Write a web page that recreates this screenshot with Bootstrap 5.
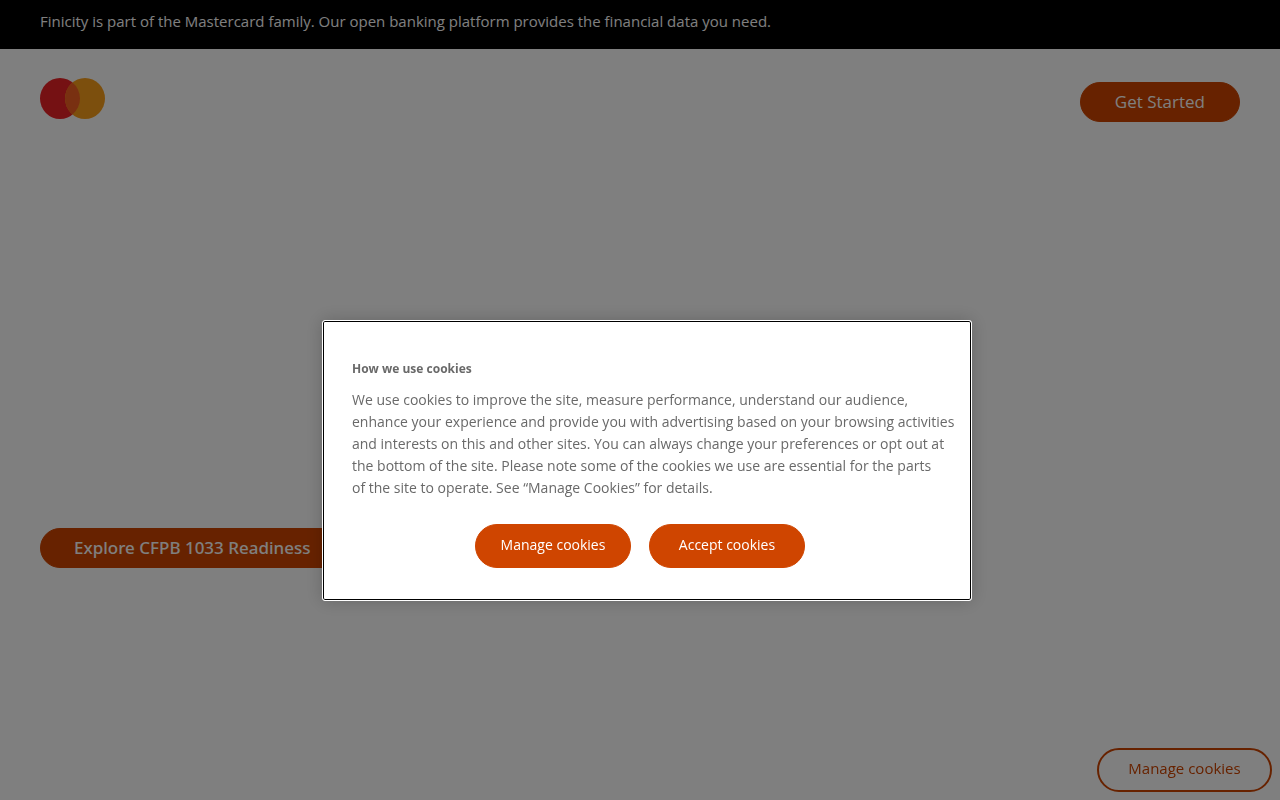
<!DOCTYPE html>
<html lang="en">
<head>
<meta charset="utf-8">
<meta name="viewport" content="width=device-width, initial-scale=1">
<title>Finicity, a Mastercard company</title>
<link href="https://cdn.jsdelivr.net/npm/bootstrap@5.3.0/dist/css/bootstrap.min.css" rel="stylesheet">
<style>
  :root { --brand: #cf4500; }
  body { font-family: "Open Sans", "Noto Sans", sans-serif; }
  .notice { font-size: 15px; line-height: 20px; padding: 11px 40px 18px; }
  .site-header { padding: 29px 40px; }
  .btn-brand {
    --bs-btn-bg: var(--brand); --bs-btn-color: #fff; --bs-btn-border-color: var(--brand);
    --bs-btn-hover-bg: #b03b00; --bs-btn-hover-color: #fff; --bs-btn-hover-border-color: #b03b00;
    --bs-btn-active-bg: #b03b00; --bs-btn-active-color: #fff;
  }
  .btn-cta { font-size: 17px; line-height: 24px; padding: 7px 34px; }
  .btn-hero { font-family: "Noto Sans", "Open Sans", sans-serif; font-weight: 500; padding: 7px 33px; }
  .btn-consent { font-size: 14px; line-height: 20px; padding: 10px 0 12px; width: 156px; }
  .btn-manage {
    --bs-btn-color: var(--brand); --bs-btn-border-color: var(--brand); --bs-btn-border-width: 2px;
    --bs-btn-hover-color: #fff; --bs-btn-hover-bg: var(--brand);
    font-size: 15px; line-height: 20px; padding: 8px 0 12px; width: 175px;
  }
  .hero { padding: 377px 40px 0; }
  .consent-layer { padding: 121px 0 0 14px; }
  .consent {
    width: 650px; color: #696969;
    border: 1px solid #fff; border-radius: 3px;
    box-shadow: inset 0 0 0 1px #000, 0 0 18px rgba(0, 0, 0, .2);
    padding: 39px 15px 32px 29px;
  }
  .consent h2 { font-size: 12px; line-height: 18px; margin-bottom: 11px; }
  .consent p { font-size: 14px; line-height: 22px; margin-bottom: 25px; }
  .consent-actions { gap: 18px; padding-right: 28px; }
</style>
</head>
<body class="bg-white">
<div class="notice bg-black text-white">Finicity is part of the Mastercard family. Our open banking platform provides the financial data you need.</div>
<header class="site-header d-flex justify-content-between align-items-start">
  <a href="#" aria-label="Mastercard home" class="d-block lh-1">
    <svg class="d-block" width="65" height="41" viewBox="0 0 65 41" aria-hidden="true">
      <ellipse cx="20" cy="20.5" rx="20" ry="20.5" fill="#eb2226"/>
      <ellipse cx="45" cy="20.5" rx="20" ry="20.5" fill="#f99f1b"/>
      <path d="M32.5 4.5A20 20.5 0 0 1 32.5 36.5A20 20.5 0 0 1 32.5 4.5Z" fill="#f26122"/>
    </svg>
  </a>
  <a href="#" class="btn btn-brand btn-cta rounded-pill mt-1">Get Started</a>
</header>
<main class="hero">
  <a href="#" class="btn btn-brand btn-cta btn-hero rounded-pill">Explore CFPB 1033 Readiness</a>
</main>
<div class="position-fixed bottom-0 end-0 p-2">
  <button type="button" class="btn btn-manage rounded-pill">Manage cookies</button>
</div>
<div class="modal-backdrop show"></div>
<div class="modal d-flex align-items-center justify-content-center consent-layer" role="dialog" aria-modal="true" aria-labelledby="consentTitle">
  <section class="consent bg-white">
    <h2 id="consentTitle" class="fw-bold">How we use cookies</h2>
    <p>We use cookies to improve the site, measure performance, understand our audience,<br>
    enhance your experience and provide you with advertising based on your browsing activities<br>
    and interests on this and other sites. You can always change your preferences or opt out at<br>
    the bottom of the site. Please note some of the cookies we use are essential for the parts<br>
    of the site to operate. See “Manage Cookies” for details.</p>
    <div class="consent-actions d-flex justify-content-center">
      <button type="button" class="btn btn-brand btn-consent rounded-pill">Manage cookies</button>
      <button type="button" class="btn btn-brand btn-consent rounded-pill">Accept cookies</button>
    </div>
  </section>
</div>
<script src="https://cdn.jsdelivr.net/npm/bootstrap@5.3.0/dist/js/bootstrap.bundle.min.js"></script>
</body>
</html>
